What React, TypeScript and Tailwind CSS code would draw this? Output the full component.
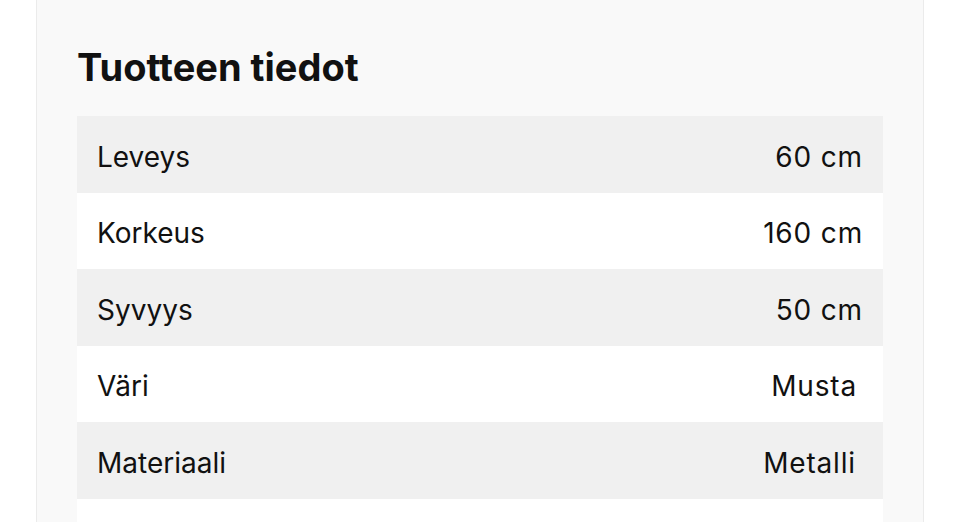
const rows = [
  { label: "Leveys", value: "60 cm" },
  { label: "Korkeus", value: "160 cm" },
  { label: "Syvyys", value: "50 cm" },
  { label: "Väri", value: "Musta", pad: "pr-[26px]" },
  { label: "Materiaali", value: "Metalli", pad: "pr-[27px]" },
];

export default function App() {
  return (
    <main className="h-[522px] overflow-hidden bg-white font-['Inter',sans-serif] text-[#111]">
      <section className="ml-[36px] h-full w-[888px] border-x border-[#ebebeb] bg-[#f9f9f9] px-10 pt-[44px]">
        <h2 className="mb-[26px] text-[38px] font-bold leading-[46px]">
          Tuotteen tiedot
        </h2>
        <div className="flex flex-col">
          {rows.map((row, i) => (
            <div
              key={row.label}
              className={
                "flex h-[76.5px] items-center justify-between pl-5 pt-[5px] text-[28px] " +
                (row.pad ?? "pr-5") +
                " " +
                (i % 2 === 0 ? "bg-[#f0f0f0]" : "bg-white")
              }
            >
              <span>{row.label}</span>
              <span className="tracking-[0.03em]">{row.value}</span>
            </div>
          ))}
          {/* next row starts just above the fold */}
          <div className="h-[76.5px] bg-white" />
        </div>
      </section>
    </main>
  );
}
